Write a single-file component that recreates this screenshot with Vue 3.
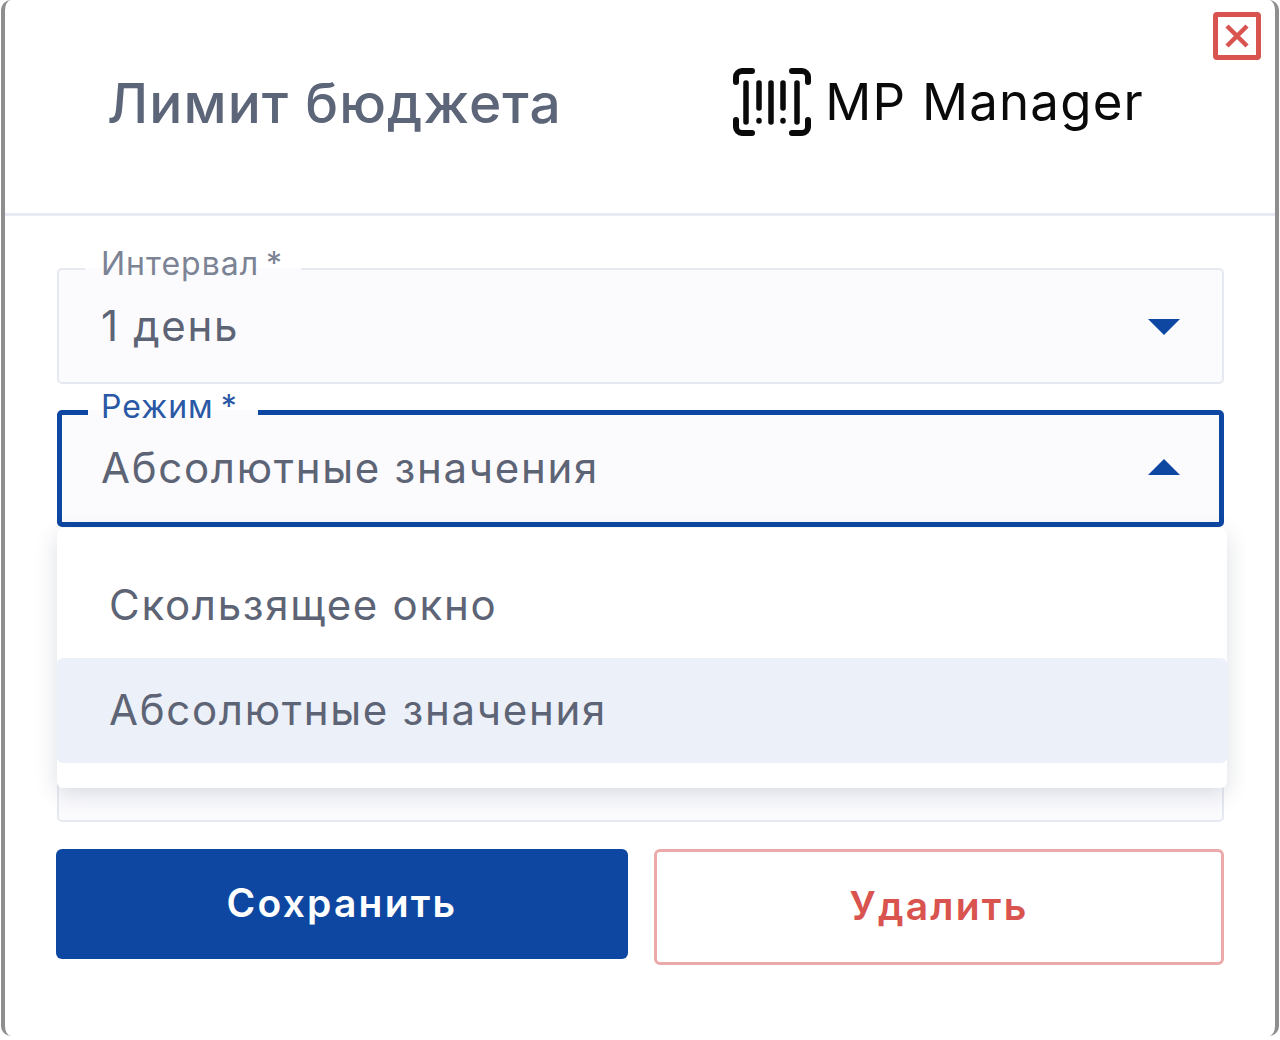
<script setup>
const options = [
  { label: 'Скользящее окно', active: false },
  { label: 'Абсолютные значения', active: true },
]
</script>

<template>
  <div class="page">
    <section class="modal">
      <header class="modal-head">
        <h1 class="modal-title">Лимит бюджета</h1>
        <div class="logo">
          <svg class="logo-mark" width="80" height="68" viewBox="0 0 80 68" fill="none" stroke="#0a0a0a" stroke-linecap="round" stroke-linejoin="round">
            <g stroke-width="6">
              <path d="M4 14V9a6 6 0 0 1 6-6h10" />
              <path d="M76 14V9a6 6 0 0 0-6-6H60" />
              <path d="M4 52v7a6 6 0 0 0 6 6h10" />
              <path d="M76 52v7a6 6 0 0 1-6 6H60" />
            </g>
            <g stroke-width="5.5">
              <path d="M14 15v39" />
              <path d="M27 15v25" />
              <path d="M27 52.5v.5" />
              <path d="M39 15v39" />
              <path d="M51 15v25" />
              <path d="M51 52.5v.5" />
              <path d="M65 15v39" />
            </g>
          </svg>
          <span class="logo-text">MP Manager</span>
        </div>
        <button type="button" class="close-btn" aria-label="Закрыть">
          <svg width="24" height="24" viewBox="0 0 24 24" fill="none" stroke="#d9534f" stroke-width="4.5">
            <path d="M2 2l20 20M22 2L2 22" />
          </svg>
        </button>
      </header>

      <div class="modal-body">
        <fieldset class="field">
          <legend class="field-label">Интервал<i>*</i></legend>
          <div class="field-row">
            <span class="field-value">1 день</span>
            <svg class="caret" width="32" height="16" viewBox="0 0 32 16"><path d="M0 0h32L16 16z" /></svg>
          </div>
        </fieldset>

        <div class="select-wrap">
          <fieldset class="field field-open">
            <legend class="field-label">Режим<i>*</i></legend>
            <div class="field-row">
              <span class="field-value">Абсолютные значения</span>
              <svg class="caret" width="32" height="16" viewBox="0 0 32 16"><path d="M0 16h32L16 0z" /></svg>
            </div>
          </fieldset>
          <ul class="menu">
            <li v-for="opt in options" :key="opt.label" class="menu-item" :class="{ active: opt.active }">
              {{ opt.label }}
            </li>
          </ul>
        </div>

        <div class="field-behind"></div>

        <div class="actions">
          <button type="button" class="btn btn-save">Сохранить</button>
          <button type="button" class="btn btn-delete">Удалить</button>
        </div>
      </div>
    </section>
  </div>
</template>

<style>
html,
body {
  background: #ffffff;
}
</style>

<style scoped>
.page {
  width: 1280px;
  height: 1040px;
  padding: 0 1px;
  box-sizing: border-box;
  font-family: Inter, "Noto Sans", sans-serif;
  overflow: hidden;
}

.modal {
  height: 1036px;
  box-sizing: border-box;
  background: #ffffff;
  border-left: 4px solid #8e8e8e;
  border-right: 4px solid #8e8e8e;
  border-radius: 10px;
  display: flex;
  flex-direction: column;
}

.modal-head {
  position: relative;
  height: 216px;
  flex: none;
  box-sizing: border-box;
  border-bottom: 3px solid #e9ebf3;
  display: flex;
  align-items: center;
  padding: 0 131px 0 102px;
}

.modal-title {
  margin: 0 0 7px;
  font-size: 55px;
  font-weight: 500;
  letter-spacing: 1.1px;
  color: #5d6579;
}

.logo {
  margin-left: auto;
  display: flex;
  align-items: center;
  gap: 13px;
  margin-bottom: 10px;
}

.logo-mark {
  display: block;
}

.logo-text {
  font-size: 51px;
  font-weight: 400;
  letter-spacing: 1.2px;
  color: #0a0a0a;
}

.close-btn {
  position: absolute;
  top: 12px;
  right: 14px;
  width: 48px;
  height: 48px;
  padding: 0;
  box-sizing: border-box;
  background: #fff;
  border: 5px solid #d9534f;
  border-radius: 4px;
  display: flex;
  align-items: center;
  justify-content: center;
}

.modal-body {
  padding: 38px 51px 0 52px;
}

.field {
  margin: 0;
  padding: 0 42px 0 42px;
  height: 130px;
  box-sizing: border-box;
  min-width: 0;
  background: #fbfbfe;
  border: 2px solid #e7e9f1;
  border-radius: 5px;
}

.field-label {
  padding: 0 18px 10px 16px;
  margin-left: -16px;
  font-size: 32px;
  line-height: 20px;
  letter-spacing: 1px;
  color: #7c8394;
}

.field-label i {
  font-style: normal;
  margin-left: 7px;
}

.field-row {
  display: flex;
  align-items: center;
  justify-content: space-between;
  height: 82px;
}

.field-value {
  font-size: 42px;
  letter-spacing: 1.7px;
  color: #5d6475;
}

.caret {
  fill: #0d47a1;
  display: block;
  margin-top: 4px;
}

.select-wrap {
  position: relative;
  margin-top: 13px;
}

.field-open {
  border: 5px solid #0d47a1;
  padding: 0 39px 0 39px;
}

.field-open .field-row {
  height: 80px;
}

.field-open .caret {
  margin-top: 0;
}

.field-open .field-label {
  color: #2a58a5;
  padding: 0 20px 10px 13px;
  margin-left: -13px;
}

.menu {
  position: absolute;
  top: 131px;
  left: 0;
  width: 1170px;
  margin: 0;
  padding: 25px 0;
  box-sizing: border-box;
  list-style: none;
  background: #ffffff;
  border-radius: 6px;
  box-shadow: 0 6px 22px rgba(40, 50, 80, 0.16);
  z-index: 2;
}

.menu-item {
  height: 105px;
  padding: 0 0 2px 52px;
  box-sizing: border-box;
  display: flex;
  align-items: center;
  font-size: 42px;
  letter-spacing: 1.7px;
  color: #5d6475;
  border-radius: 6px;
}

.menu-item.active {
  background: #ecf0f8;
}

.field-behind {
  margin-top: 13px;
  height: 282px;
  box-sizing: border-box;
  background: #fbfbfe;
  border: 2px solid #e7e9f1;
  border-radius: 5px;
}

.actions {
  margin: 27px 0 0 -1px;
  display: flex;
  gap: 26px;
  align-items: flex-start;
}

.btn {
  font-family: inherit;
  font-size: 39px;
  font-weight: 600;
  letter-spacing: 2.2px;
  border-radius: 6px;
  padding: 0 0 4px;
  box-sizing: border-box;
}

.btn-save {
  width: 572px;
  height: 110px;
  background: #0d47a1;
  border: none;
  color: #ffffff;
}

.btn-delete {
  width: 570px;
  height: 116px;
  background: #ffffff;
  border: 3px solid #eba9a9;
  color: #d9534f;
}
</style>
